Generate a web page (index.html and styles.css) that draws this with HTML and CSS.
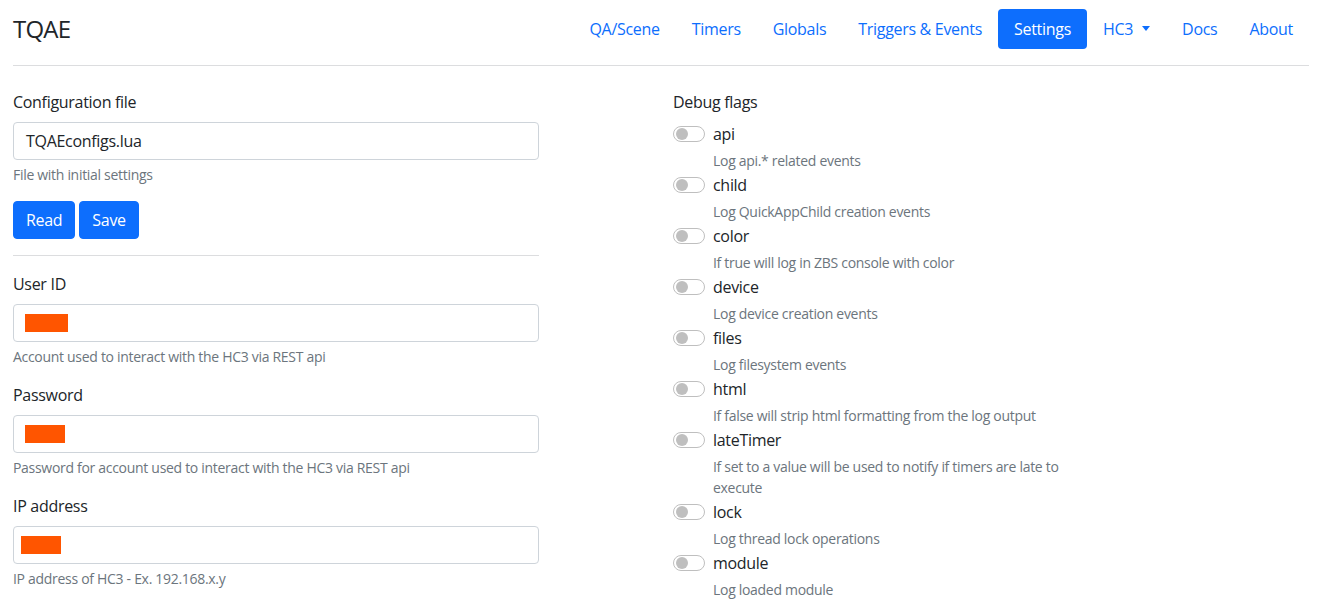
FILE: index.html
```html
<!DOCTYPE html>
<html lang="en">
<head>
<meta charset="utf-8">
<title>TQAE Settings</title>
<link rel="stylesheet" href="styles.css">
</head>
<body>
<div class="page">
  <header class="topbar">
    <span class="brand">TQAE</span>
    <nav class="nav">
      <a class="nav-link" href="#">QA/Scene</a>
      <a class="nav-link" href="#">Timers</a>
      <a class="nav-link" href="#">Globals</a>
      <a class="nav-link" href="#">Triggers &amp; Events</a>
      <a class="nav-link active" href="#">Settings</a>
      <a class="nav-link dropdown" href="#">HC3<span class="caret"></span></a>
      <a class="nav-link" href="#">Docs</a>
      <a class="nav-link" href="#">About</a>
    </nav>
  </header>
  <hr class="divider">
  <main class="cols">
    <section class="col-left">
      <div class="group">
        <label class="form-label">Configuration file</label>
        <div class="input"><span class="value">TQAEconfigs.lua</span></div>
        <div class="form-text">File with initial settings</div>
      </div>
      <div class="buttons">
        <button class="btn">Read</button>
        <button class="btn">Save</button>
      </div>
      <hr class="sep">
      <div class="group">
        <label class="form-label">User ID</label>
        <div class="input"><span class="redact r1"></span></div>
        <div class="form-text">Account used to interact with the HC3 via REST api</div>
      </div>
      <div class="group">
        <label class="form-label">Password</label>
        <div class="input"><span class="redact r2"></span></div>
        <div class="form-text">Password for account used to interact with the HC3 via REST api</div>
      </div>
      <div class="group">
        <label class="form-label">IP address</label>
        <div class="input"><span class="redact r3"></span></div>
        <div class="form-text">IP address of HC3 - Ex. 192.168.x.y</div>
      </div>
    </section>
    <section class="col-right">
      <label class="form-label">Debug flags</label>
      <div class="flags">
        <div class="flag"><div class="flag-row"><span class="switch"></span><span class="flag-name">api</span></div><div class="flag-desc">Log api.* related events</div></div>
        <div class="flag"><div class="flag-row"><span class="switch"></span><span class="flag-name">child</span></div><div class="flag-desc">Log QuickAppChild creation events</div></div>
        <div class="flag"><div class="flag-row"><span class="switch"></span><span class="flag-name">color</span></div><div class="flag-desc">If true will log in ZBS console with color</div></div>
        <div class="flag"><div class="flag-row"><span class="switch"></span><span class="flag-name">device</span></div><div class="flag-desc">Log device creation events</div></div>
        <div class="flag"><div class="flag-row"><span class="switch"></span><span class="flag-name">files</span></div><div class="flag-desc">Log filesystem events</div></div>
        <div class="flag"><div class="flag-row"><span class="switch"></span><span class="flag-name">html</span></div><div class="flag-desc">If false will strip html formatting from the log output</div></div>
        <div class="flag"><div class="flag-row"><span class="switch"></span><span class="flag-name">lateTimer</span></div><div class="flag-desc">If set to a value will be used to notify if timers are late to execute</div></div>
        <div class="flag"><div class="flag-row"><span class="switch"></span><span class="flag-name">lock</span></div><div class="flag-desc">Log thread lock operations</div></div>
        <div class="flag"><div class="flag-row"><span class="switch"></span><span class="flag-name">module</span></div><div class="flag-desc">Log loaded module</div></div>
      </div>
    </section>
  </main>
</div>
</body>
</html>
```
FILE: styles.css
```css
* { box-sizing: border-box; }
html, body { margin: 0; padding: 0; background: #fff; }
body {
  font-family: "Open Sans", "Noto Sans", sans-serif;
  font-size: 16px;
  line-height: 24px;
  letter-spacing: -0.3px;
  color: #212529;
  overflow: hidden;
}
.page { padding: 0 18px 0 13px; }

.topbar {
  display: flex;
  align-items: center;
  justify-content: space-between;
  padding-top: 9px;
  height: 49px;
}
.brand { font-size: 24px; letter-spacing: -0.8px; line-height: 40px; color: #212529; }
.nav { display: flex; align-items: center; }
.nav-link {
  display: block;
  padding: 8px 16px;
  line-height: 24px;
  color: #0d6efd;
  text-decoration: none;
  border-radius: 4px;
}
.nav-link.active { background: #0d6efd; color: #fff; }
.caret {
  display: inline-block;
  margin-left: 9px;
  vertical-align: 4px;
  border-top: 5px solid #0d6efd;
  border-left: 4.5px solid transparent;
  border-right: 4.5px solid transparent;
}

.divider { margin: 16px 0 24px; border: 0; border-top: 1px solid #dcdddf; height: 0; }

.cols { display: grid; grid-template-columns: 1fr 1fr; column-gap: 24px; }
.col-left { max-width: 526px; }

.group { margin-bottom: 16px; }
.form-label { display: block; margin-bottom: 8px; }
.input {
  height: 38px;
  border: 1px solid #ced4da;
  border-radius: 4px;
  padding: 6px 12px;
  display: flex;
  align-items: center;
}
.value { color: #212529; }
.form-text { margin-top: 4px; font-size: 14px; line-height: 21px; color: #6c757d; }

.buttons { display: flex; gap: 4px; }
.btn {
  font: inherit;
  letter-spacing: inherit;
  color: #fff;
  background: #0d6efd;
  border: 1px solid #0d6efd;
  border-radius: 4px;
  padding: 6px 12px;
  line-height: 24px;
}
.sep { margin: 16px 0; border: 0; border-top: 1px solid #dcdddf; height: 0; }

.redact { display: block; background: #ff5500; height: 18px; }
.r1 { width: 43px; margin-left: -1px; }
.r2 { width: 40px; margin-left: -1px; }
.r3 { width: 40px; margin-left: -5px; }

.flags { width: 400px; }
.flag { margin-bottom: 2px; }
.flag-row { display: flex; align-items: flex-start; }
.switch {
  position: relative;
  flex: none;
  width: 32px;
  height: 16px;
  margin-top: 4px;
  margin-right: 8px;
  border: 1px solid #bfbfbf;
  border-radius: 16px;
  background: #fff;
}
.switch::before {
  content: "";
  position: absolute;
  left: 2px;
  top: 1px;
  width: 12px;
  height: 12px;
  border-radius: 50%;
  background: #bfbfbf;
}
.flag-name { line-height: 24px; }
.flag-desc { margin: 4px 0 0 40px; font-size: 14px; line-height: 21px; color: #6c757d; }
```
